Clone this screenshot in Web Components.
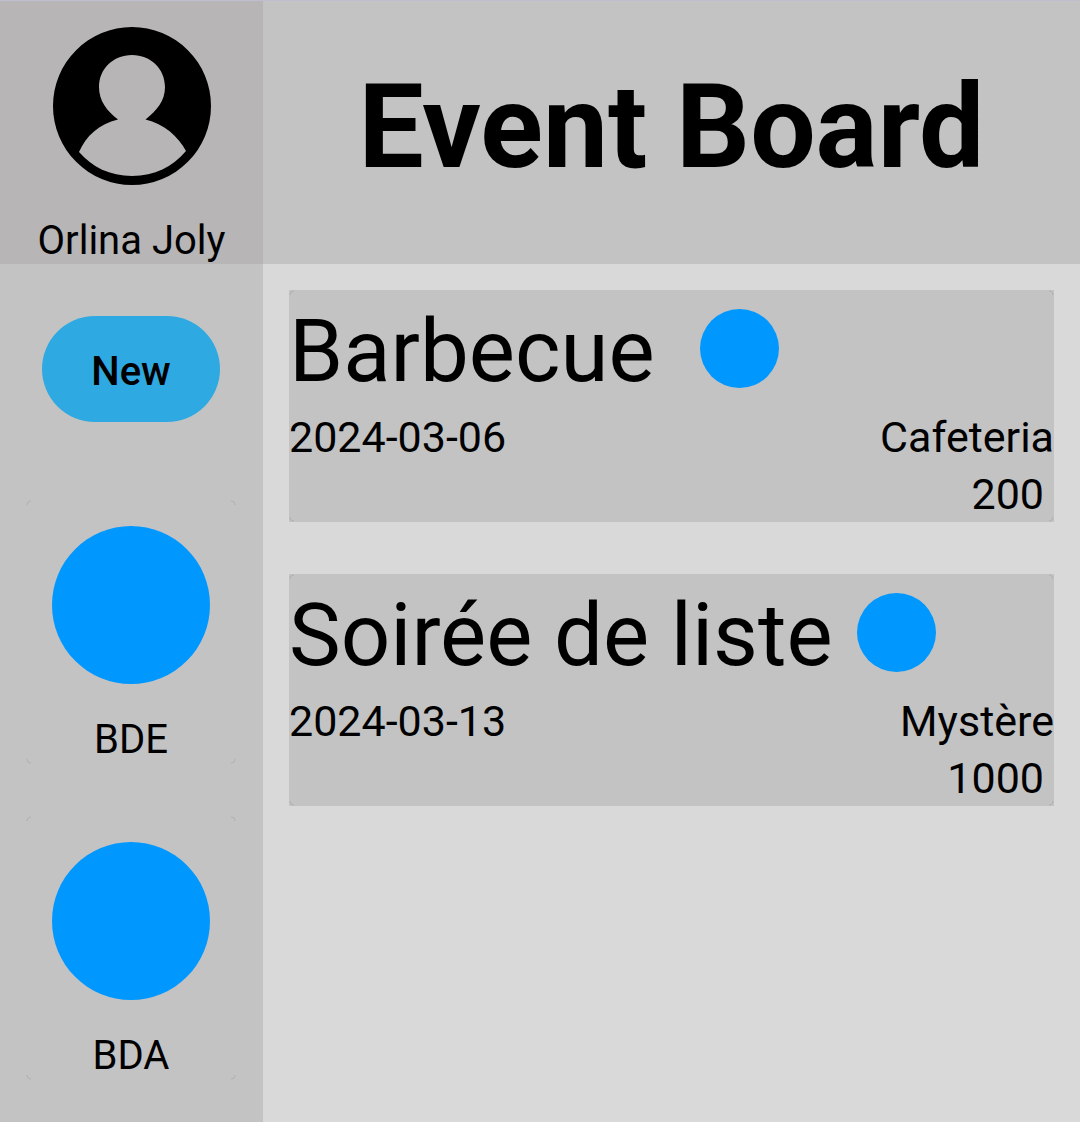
<!DOCTYPE html>
<html lang="fr">
<head>
<meta charset="utf-8">
<meta name="viewport" content="width=device-width, initial-scale=1">
<title>Event Board</title>
<style>
  html, body { height: 100%; }
  body { margin: 0; font-family: Roboto, "Noto Sans", sans-serif; color: #000; background: #d9d9d9; }
</style>
</head>
<body>
<event-board>
  <user-profile slot="profile">Orlina Joly</user-profile>
  <span slot="title">Event Board</span>
  <new-button slot="side">New</new-button>
  <group-card slot="side">BDE</group-card>
  <group-card slot="side">BDA</group-card>
  <event-card date="2024-03-06" place="Cafeteria" seats="200">Barbecue&nbsp;</event-card>
  <event-card date="2024-03-13" place="Mystère" seats="1000">Soirée de liste</event-card>
</event-board>
<script>
  class BaseElement extends HTMLElement {
    constructor() {
      super();
      this.attachShadow({ mode: 'open' });
    }
    connectedCallback() {
      this.shadowRoot.innerHTML = this.render();
    }
  }

  // Faint marks on the four rounded corners of a card
  const corner = (x, y) => `radial-gradient(circle at ${x} ${y}, transparent 3px, #b0b0b0 4px, transparent 5px)`;
  const corners = `
    ${corner('100%', '100%')} top left / 5px 5px no-repeat,
    ${corner('0', '100%')} top right / 5px 5px no-repeat,
    ${corner('100%', '0')} bottom left / 5px 5px no-repeat,
    ${corner('0', '0')} bottom right / 5px 5px no-repeat,
    #c3c3c3`;

  customElements.define('event-board', class extends BaseElement {
    render() {
      return `
        <style>
          :host { display: grid; grid-template-columns: 263px 1fr; grid-template-rows: auto 1fr; min-height: 100%; box-sizing: border-box; border-top: 1px solid #bfbdd0; }
          .profile { background: #b7b5b5; }
          header { background: #c3c3c3; display: flex; justify-content: center; padding-top: 58px; }
          h1 { margin: 0; font-size: 116px; line-height: 136px; font-weight: 700; white-space: nowrap; }
          nav { background: #c3c3c3; display: flex; flex-direction: column; align-items: center; gap: 52px; padding: 52px 27px 26px 26px; }
          main { display: flex; flex-direction: column; gap: 52px; padding: 26px; }
        </style>
        <div class="profile"><slot name="profile"></slot></div>
        <header><h1><slot name="title"></slot></h1></header>
        <nav><slot name="side"></slot></nav>
        <main><slot></slot></main>`;
    }
  });

  customElements.define('user-profile', class extends BaseElement {
    render() {
      return `
        <style>
          :host { display: flex; flex-direction: column; align-items: center; gap: 31px; padding-top: 25px; font-size: 40px; line-height: 47px; white-space: nowrap; }
          svg { width: 160px; height: 160px; display: block; }
        </style>
        <svg viewBox="0 0 160 160" aria-hidden="true">
          <path fill="#000" fill-rule="evenodd" d="M80 1a79 79 0 1 1 0 158a79 79 0 1 1 0-158Z
            M80 29C61 29 47 43 47 61C47 75 55 85 66 93.500C47 98 34 110 27 126C40 141 58 150 80 150C103 150 120 141 134 125C126 110 112 98 93.500 93.500C105 84 113 75 113 61C113 43 99 29 80 29Z"/>
        </svg>
        <slot></slot>`;
    }
  });

  customElements.define('new-button', class extends BaseElement {
    render() {
      return `
        <style>
          :host { display: block; margin-bottom: 26px; }
          button { display: block; border: 0; border-radius: 53px; width: 178px; height: 106px; padding: 4px 0 0; background: #2ea9e1; color: #000; font: 500 40px/47px Roboto, "Noto Sans", sans-serif; }
        </style>
        <button type="button"><slot></slot></button>`;
    }
  });

  customElements.define('group-card', class extends BaseElement {
    render() {
      return `
        <style>
          :host { display: flex; flex-direction: column; align-items: center; gap: 32px; align-self: stretch; padding: 26px 0 1px; font-size: 40px; line-height: 47px; background: ${corners}; }
          .dot { width: 158px; height: 158px; border-radius: 50%; background: #0098ff; }
        </style>
        <div class="dot"></div>
        <slot></slot>`;
    }
  });

  customElements.define('event-card', class extends BaseElement {
    render() {
      const [date, place, seats] = ['date', 'place', 'seats'].map((name) => this.getAttribute(name));
      return `
        <style>
          :host { display: block; font-size: 43px; line-height: 58px; background: ${corners}; }
          .head { display: flex; align-items: center; gap: 24px; height: 116px; padding-bottom: 2px; }
          h2 { margin: 0; padding-top: 6px; font-size: 87px; line-height: 102px; font-weight: 400; white-space: nowrap; }
          .dot { width: 79px; height: 79px; border-radius: 50%; background: #0098ff; flex: none; }
          .row { display: flex; justify-content: space-between; }
          .seats { text-align: right; padding-right: 10px; line-height: 56px; }
        </style>
        <div class="head"><h2><slot></slot></h2><div class="dot"></div></div>
        <div class="row"><time datetime="${date}">${date}</time><span>${place}</span></div>
        <div class="seats">${seats}</div>`;
    }
  });
</script>
</body>
</html>
